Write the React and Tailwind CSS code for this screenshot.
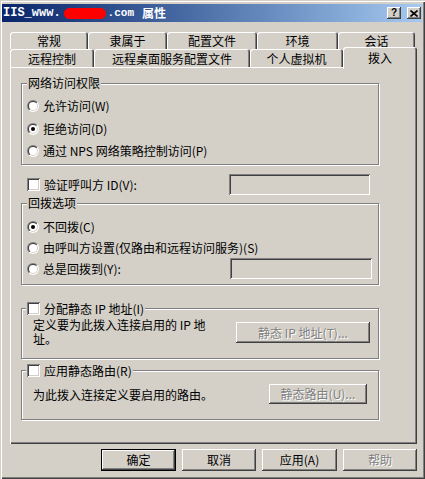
import React from "react";

const raised =
  "shadow-[inset_-1px_-1px_#404040,inset_1px_1px_#ffffff,inset_-2px_-2px_#808080,inset_2px_2px_#d4d0c8]";
const sunken =
  "shadow-[inset_1px_1px_#808080,inset_-1px_-1px_#ffffff,inset_2px_2px_#404040,inset_-2px_-2px_#d4d0c8]";
const etched = "border border-[#808080] shadow-[inset_1px_1px_#ffffff,1px_1px_#ffffff]";
const tab1 =
  "h-[17px] flex justify-center pt-[3px] leading-[12px] rounded-t-[3px] shadow-[inset_1px_1px_#ffffff,inset_-1px_0_#404040,inset_-2px_0_#808080]";
const tab2 =
  "h-[18px] flex justify-center pt-[4px] leading-[12px] rounded-t-[3px] shadow-[inset_1px_1px_#ffffff,inset_-1px_0_#404040,inset_-2px_0_#808080]";

function Radio({ checked }) {
  return (
    <svg width="12" height="12" viewBox="0 0 12 12" className="shrink-0">
      <defs>
        <linearGradient id="rgo" x1="0" y1="0" x2="1" y2="1">
          <stop offset="0.5" stopColor="#808080" />
          <stop offset="0.5" stopColor="#ffffff" />
        </linearGradient>
        <linearGradient id="rgi" x1="0" y1="0" x2="1" y2="1">
          <stop offset="0.5" stopColor="#404040" />
          <stop offset="0.5" stopColor="#d4d0c8" />
        </linearGradient>
      </defs>
      <circle cx="6" cy="6" r="6" fill="url(#rgo)" />
      <circle cx="6" cy="6" r="5" fill="url(#rgi)" />
      <circle cx="6" cy="6" r="4" fill="#ffffff" />
      {checked && <circle cx="6" cy="6" r="2" fill="#000000" />}
    </svg>
  );
}

function Check() {
  return <div className={"w-[13px] h-[13px] shrink-0 bg-white " + sunken} />;
}

function RadioRow({ checked, children, h }) {
  return (
    <div className={"flex items-center gap-[4px] " + h}>
      <Radio checked={checked} />
      <span>{children}</span>
    </div>
  );
}

export default function App() {
  return (
    <div className="w-[425px] h-[479px] bg-[#d4d0c8] flex flex-col text-[12px] text-black font-['Noto_Sans_CJK_SC',sans-serif] shadow-[inset_1px_1px_#d4d0c8,inset_2px_2px_#ffffff,inset_-1px_-1px_#404040,inset_-2px_-2px_#808080]">
      {/* Title bar */}
      <div className="mt-[4px] ml-[2px] mr-[3px] h-[18px] flex items-center pl-[1px] pr-[1px] bg-gradient-to-r from-[#0a246a] to-[#a6caf0] text-white">
        <span className="font-['Liberation_Mono',monospace] font-bold text-[12px] leading-[12px]">IIS_www.</span>
        <span className="ml-[3px] w-[42px] h-[11px] bg-[#ff0000] rounded-[6px]" />
        <span className="ml-[2px] font-['Liberation_Mono',monospace] font-bold text-[11px] leading-[12px]">.com</span>
        <span className="ml-[8px] font-bold text-[12px] leading-[12px]">属性</span>
        <div className="ml-auto flex items-center gap-[6px]">
          <div className={"w-[14px] h-[12px] bg-[#d4d0c8] text-black flex items-center justify-center font-['Liberation_Sans',sans-serif] font-bold text-[10px] leading-[10px] " + raised}>?</div>
          <div className={"w-[14px] h-[12px] bg-[#d4d0c8] flex items-center justify-center " + raised}>
            <svg width="8" height="7" viewBox="0 0 8 7">
              <path d="M0.5 0.5 L7.5 6.5 M7.5 0.5 L0.5 6.5" stroke="#000" strokeWidth="1.6" />
            </svg>
          </div>
        </div>
      </div>

      <div className="pl-[10px] pt-[10px] flex flex-col">
        {/* Tabs row 1 */}
        <div className="flex h-[17px]">
          <div className={"w-[78px] " + tab1}>常规</div>
          <div className={"w-[79px] " + tab1}>隶属于</div>
          <div className={"w-[90px] " + tab1}>配置文件</div>
          <div className={"w-[81px] " + tab1}>环境</div>
          <div className={"w-[77px] " + tab1}>会话</div>
        </div>
        {/* Tabs row 2 */}
        <div className="flex h-[18px] items-end">
          <div className={"w-[84px] " + tab2}>远程控制</div>
          <div className={"w-[156px] " + tab2}>远程桌面服务配置文件</div>
          <div className={"w-[93px] " + tab2}>个人虚拟机</div>
          <div className="w-[74px] h-[22px] -mb-[2px] relative z-10 bg-[#d4d0c8] flex justify-center pt-[5px] leading-[12px] rounded-t-[3px] shadow-[inset_1px_1px_#ffffff,inset_-1px_0_#404040,inset_-2px_0_#808080]">
            拨入
          </div>
        </div>

        {/* Panel */}
        <div className="w-[407px] h-[377px] pl-[11px] flex flex-col shadow-[inset_1px_1px_#ffffff,inset_-1px_-1px_#404040,inset_-2px_-2px_#808080]">
          {/* Group 1 */}
          <div className={"mt-[16px] relative w-[358px] h-[82px] " + etched}>
            <span className="absolute -top-[7px] left-[5px] px-[1px] bg-[#d4d0c8] leading-[12px]">网络访问权限</span>
            <div className="pt-[11px] pl-[5px] flex flex-col">
              <RadioRow h="h-[22px]">允许访问(W)</RadioRow>
              <RadioRow h="h-[23px]" checked>拒绝访问(D)</RadioRow>
              <RadioRow h="h-[22px]">通过 NPS 网络策略控制访问(P)</RadioRow>
            </div>
          </div>

          {/* Verify caller ID */}
          <div className="mt-[9px] w-[358px] h-[21px] flex items-center pl-[6px]">
            <Check />
            <span className="ml-[4px]">验证呼叫方 ID(V):</span>
            <div className={"ml-auto mr-[9px] w-[141px] h-[21px] " + sunken} />
          </div>

          {/* Group 2 */}
          <div className={"mt-[8px] relative w-[358px] h-[82px] " + etched}>
            <span className="absolute -top-[7px] left-[5px] px-[1px] bg-[#d4d0c8] leading-[12px]">回拨选项</span>
            <div className="pt-[12px] pl-[5px] flex flex-col">
              <RadioRow h="h-[21px]" checked>不回拨(C)</RadioRow>
              <RadioRow h="h-[21px]">由呼叫方设置(仅路由和远程访问服务)(S)</RadioRow>
              <div className="flex items-center gap-[4px] h-[21px]">
                <Radio />
                <span>总是回拨到(Y):</span>
                <div className={"ml-auto mr-[6px] w-[142px] h-[21px] " + sunken} />
              </div>
            </div>
          </div>

          {/* Group 3 */}
          <div className={"mt-[23px] relative w-[358px] h-[51px] " + etched}>
            <div className="absolute -top-[7px] left-[4px] px-[1px] bg-[#d4d0c8] flex items-center gap-[4px] leading-[12px]">
              <Check />
              <span>分配静态 IP 地址(I)</span>
            </div>
            <div className="flex items-start pl-[11px]">
              <div className="mt-[9px] flex flex-col leading-[14px]">
                <span>定义要为此拨入连接启用的 IP 地</span>
                <span>址。</span>
              </div>
              <div className={"ml-auto mr-[8px] mt-[13px] w-[134px] h-[21px] flex items-center justify-center text-[#808080] [text-shadow:1px_1px_#ffffff] " + raised}>
                静态 IP 地址(T)...
              </div>
            </div>
          </div>

          {/* Group 4 */}
          <div className={"mt-[11px] relative w-[358px] h-[50px] " + etched}>
            <div className="absolute -top-[7px] left-[4px] px-[1px] bg-[#d4d0c8] flex items-center gap-[4px] leading-[12px]">
              <Check />
              <span>应用静态路由(R)</span>
            </div>
            <div className="flex items-start pl-[11px]">
              <span className="mt-[18px] leading-[12px]">为此拨入连接定义要启用的路由。</span>
              <div className={"ml-auto mr-[11px] mt-[13px] w-[98px] h-[20px] flex items-center justify-center text-[#808080] [text-shadow:1px_1px_#ffffff] " + raised}>
                静态路由(U)...
              </div>
            </div>
          </div>
        </div>

        {/* Bottom buttons */}
        <div className="mt-[5px] w-[407px] flex justify-end gap-[6px]">
          <div className={"w-[75px] h-[22px] flex items-center justify-center border border-black " + raised}>确定</div>
          <div className={"w-[74px] h-[22px] flex items-center justify-center " + raised}>取消</div>
          <div className={"w-[75px] h-[22px] flex items-center justify-center " + raised}>应用(A)</div>
          <div className={"w-[74px] h-[22px] flex items-center justify-center text-[#808080] [text-shadow:1px_1px_#ffffff] " + raised}>帮助</div>
        </div>
      </div>
    </div>
  );
}
